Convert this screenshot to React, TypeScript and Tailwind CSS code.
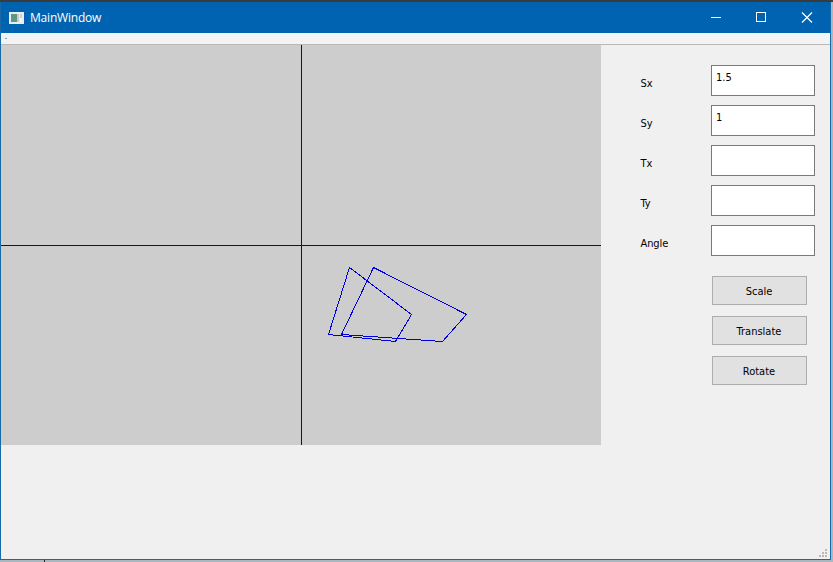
import React from 'react';

const fields = [
  { label: 'Sx', value: '1.5' },
  { label: 'Sy', value: '1' },
  { label: 'Tx', value: '' },
  { label: 'Ty', value: '' },
  { label: 'Angle', value: '' },
];

const actions = ['Scale', 'Translate', 'Rotate'];

function AppIcon() {
  return (
    <svg width="15" height="12" viewBox="0 0 15 12" shapeRendering="crispEdges">
      <rect width="15" height="12" fill="#e9eeee" />
      <rect x="2" y="2" width="6" height="8" fill="#5f9583" />
      <rect x="8" y="2" width="2" height="8" fill="#c3cdd0" />
      <rect x="11" y="2" width="2" height="4" fill="#d8cfbd" />
      <rect x="11" y="6" width="2" height="4" fill="#f5f3ee" />
    </svg>
  );
}

function TitleBar() {
  return (
    <header className="flex h-[31px] items-center bg-[#0063b1] pl-2 text-white">
      <AppIcon />
      <span className="ml-[6px] w-[71px] whitespace-nowrap pt-px font-['Open_Sans',sans-serif] text-[12px] leading-[16px] tracking-[-0.2px]">
        MainWindow
      </span>
      <svg className="ml-auto mr-[17px]" width="103" height="11" viewBox="0 0 103 11" fill="none" stroke="white">
        <path d="M1 5.5h10M46.5 .5h9v9h-9z" shapeRendering="crispEdges" />
        <path d="M92 .5l10 10M102 .5l-10 10" strokeWidth="1.2" />
      </svg>
    </header>
  );
}

function Canvas() {
  return (
    <svg
      className="block shrink-0 bg-[#cdcdcd]"
      width="600"
      height="400"
      viewBox="0 0 600 400"
      fill="none"
      stroke="#0000d8"
      shapeRendering="crispEdges"
    >
      <rect x="0" y="200" width="600" height="1" fill="#0000c8" stroke="none" />
      <rect x="300" y="0" width="1" height="400" fill="#0000c8" stroke="none" />
      <path d="M348.5 222.5L410.5 269.5L394.5 296.5L327.5 289.5Z" />
      <path d="M372.5 222.5L465.5 269.5L441.5 296.5L340.5 289.5Z" />
    </svg>
  );
}

function Controls() {
  return (
    <aside className="flex-1 pl-[39px] pt-5 text-[11px] leading-[14px] text-black">
      <div className="flex flex-col gap-[9px]">
        {fields.map((f) => (
          <label key={f.label} className="flex h-[31px] items-center">
            <span className="w-[71px] pl-[0.5px] pt-[7px] tracking-[-0.1px]">{f.label}</span>
            <input
              className="h-[31px] w-[104px] border border-[#7a7a7a] bg-white pb-[7px] pl-[4px] outline-none"
              defaultValue={f.value}
            />
          </label>
        ))}
      </div>
      <div className="ml-[72px] mt-5 flex flex-col gap-[11px]">
        {actions.map((a) => (
          <button
            key={a}
            className="h-[29px] w-[95px] border border-[#adadad] bg-[#e1e1e1] pt-[3px] pr-px"
          >
            {a}
          </button>
        ))}
      </div>
    </aside>
  );
}

function SizeGrip() {
  return (
    <svg className="mb-[2px] mr-[3px] self-end" width="8" height="8" fill="#b9b9b9" shapeRendering="crispEdges">
      <path d="M6 0h2v2h-2zM3 3h2v2h-2zM6 3h2v2h-2zM0 6h2v2h-2zM3 6h2v2h-2zM6 6h2v2h-2z" />
    </svg>
  );
}

export default function App() {
  return (
    <div className="h-[562px] w-[833px] overflow-hidden bg-[#a9b8c0] font-['DejaVu_Sans_Condensed','DejaVu_Sans',sans-serif]">
      <div className="h-[2px] bg-[#3b3b3b]" />
      <div className="flex h-[558px] w-[831px] flex-col border-x border-b border-[#1969a5] bg-[#f0f0f0]">
        <TitleBar />
        <div className="flex h-3 shrink-0 border-b border-[#bcb8b5] bg-[#f1f3f5]">
          <span className="ml-[4px] mt-[5px] h-px w-[2px] bg-[#999]" />
        </div>
        <main className="flex">
          <Canvas />
          <Controls />
        </main>
        <footer className="flex flex-1 justify-end">
          <SizeGrip />
        </footer>
      </div>
      <div className="ml-11 h-[2px] w-px bg-[#222]" />
    </div>
  );
}
